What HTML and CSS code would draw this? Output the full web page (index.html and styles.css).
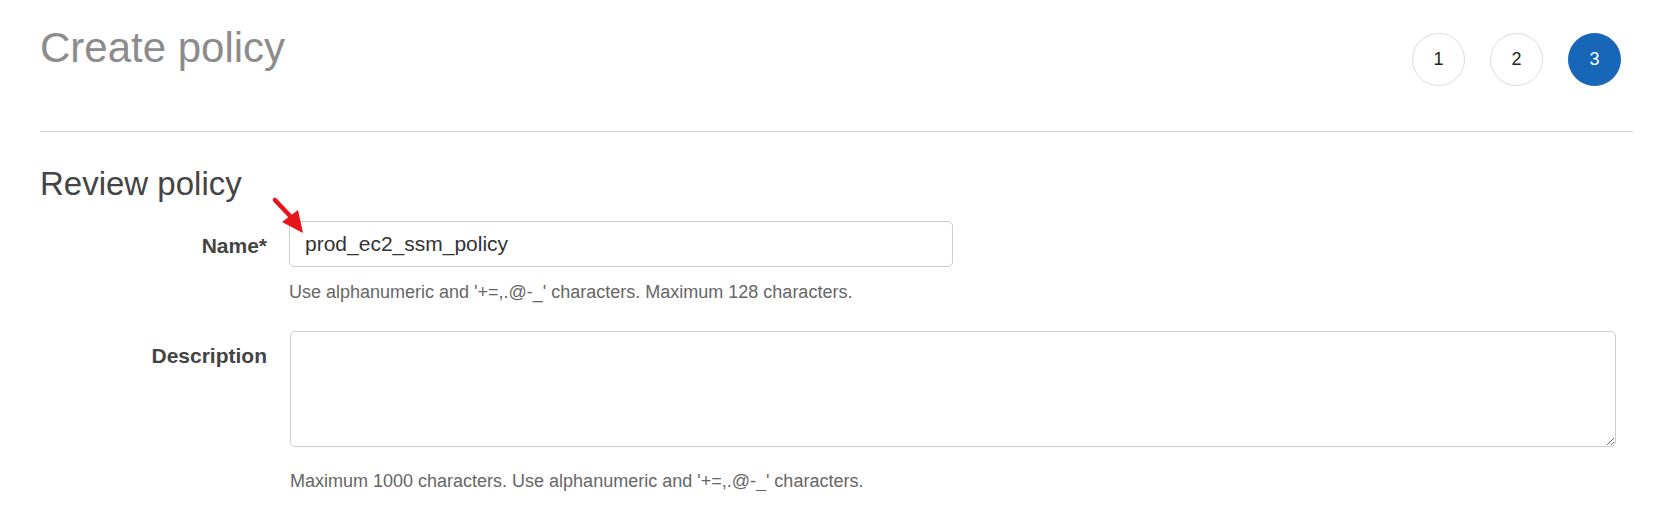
FILE: index.html
```html
<!DOCTYPE html>
<html lang="en">
<head>
<meta charset="utf-8">
<title>Create policy</title>
<link rel="stylesheet" href="styles.css">
</head>
<body>
<div class="page">
  <header class="header">
    <h1 class="title">Create policy</h1>
    <ol class="steps">
      <li class="step">1</li>
      <li class="step">2</li>
      <li class="step step-active">3</li>
    </ol>
  </header>

  <h2 class="section-title">Review policy</h2>

  <div class="form">
    <label class="label label-name" for="name">Name*</label>
    <div class="field field-name">
      <svg class="arrow" width="36" height="40" viewBox="0 0 36 40" aria-hidden="true">
        <line x1="5" y1="4" x2="21" y2="21" stroke="#e8141b" stroke-width="4.5" stroke-linecap="round"/>
        <polygon points="33,37 12,26 28,14" fill="#e8141b"/>
      </svg>
      <input id="name" class="input" type="text" value="prod_ec2_ssm_policy">
      <p class="help help-name">Use alphanumeric and '+=,.@-_' characters. Maximum 128 characters.</p>
    </div>

    <label class="label label-desc" for="desc">Description</label>
    <div class="field field-desc">
      <textarea id="desc" class="textarea"></textarea>
      <p class="help help-desc">Maximum 1000 characters. Use alphanumeric and '+=,.@-_' characters.</p>
    </div>
  </div>
</div>
</body>
</html>
```

FILE: styles.css
```css
html, body {
  margin: 0;
  padding: 0;
  background: #ffffff;
}

body {
  font-family: "Liberation Sans", Arial, sans-serif;
  color: #444444;
}

.page {
  padding: 0 21px 0 40px;
}

.header {
  display: flex;
  justify-content: space-between;
  align-items: flex-start;
  padding-bottom: 45px;
  border-bottom: 1px solid #d2d2d2;
}

.title {
  margin: 27px 0 0 0;
  font-size: 42px;
  line-height: 42px;
  font-weight: normal;
  color: #8c8c8c;
}

.steps {
  display: flex;
  gap: 25px;
  list-style: none;
  margin: 33px 12px 0 0;
  padding: 0;
}

.step {
  width: 53px;
  height: 53px;
  box-sizing: border-box;
  border: 1px solid #dcdcdc;
  border-radius: 50%;
  display: flex;
  align-items: center;
  justify-content: center;
  font-size: 18px;
  color: #222222;
  background: #ffffff;
}

.step-active {
  background: #1766b8;
  border-color: #1766b8;
  color: #ffffff;
}

.section-title {
  margin: 36px 0 0 0;
  font-size: 33px;
  line-height: 32px;
  font-weight: normal;
  color: #444444;
}

.form {
  display: grid;
  grid-template-columns: 227px 1fr;
  column-gap: 22px;
  margin-top: 21px;
}

.label {
  text-align: right;
  font-weight: bold;
  font-size: 21px;
  line-height: 20px;
  color: #444444;
  padding-top: 15px;
}

.label-desc {
  margin-top: 29px;
}

.field {
  position: relative;
}

.field-desc {
  margin-top: 29px;
}

.input {
  display: block;
  box-sizing: border-box;
  width: 664px;
  height: 46px;
  margin: 0;
  padding: 0 15px;
  border: 1px solid #cccccc;
  border-radius: 5px;
  font-family: "Liberation Sans", Arial, sans-serif;
  font-size: 21px;
  color: #333333;
  background: #ffffff;
  outline: none;
}

.textarea {
  display: block;
  box-sizing: border-box;
  width: 1326px;
  height: 116px;
  margin: 0 0 0 1px;
  padding: 10px 15px;
  border: 1px solid #cccccc;
  border-radius: 5px;
  font-family: "Liberation Sans", Arial, sans-serif;
  font-size: 21px;
  background: #ffffff;
  outline: none;
}

.help {
  margin: 0;
  font-size: 18px;
  line-height: 20px;
  color: #666666;
}

.help-name {
  margin-top: 15px;
}

.help-desc {
  margin-top: 24px;
  padding-left: 1px;
}

.arrow {
  position: absolute;
  left: -19px;
  top: -25px;
}
```
